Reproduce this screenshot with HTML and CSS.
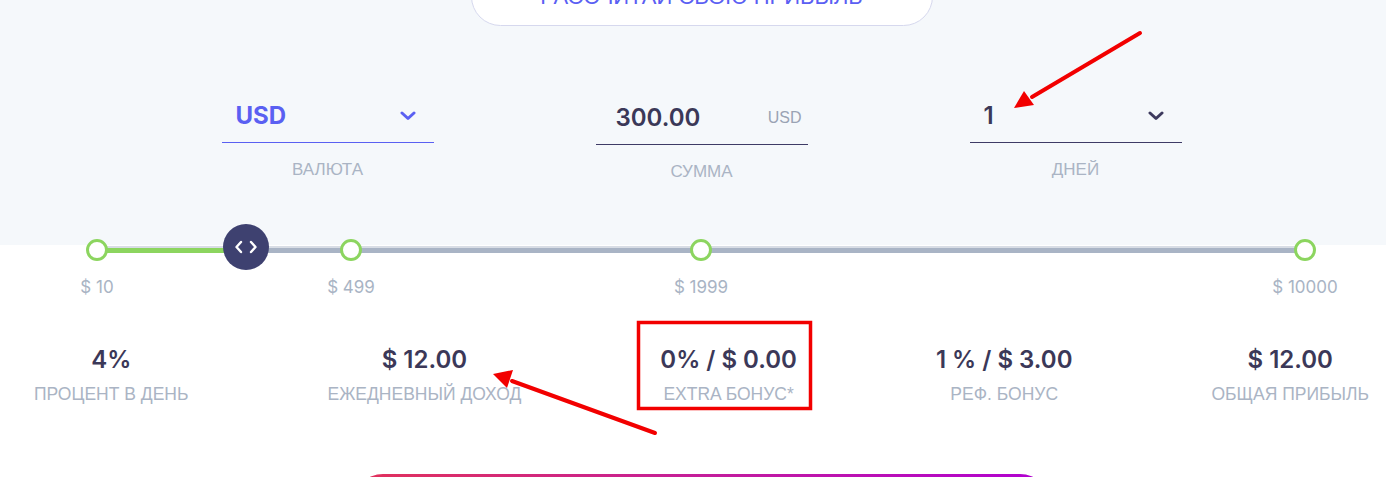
FILE: index.html
```html
<!DOCTYPE html>
<html lang="ru">
<head>
<meta charset="utf-8">
<title>Калькулятор прибыли</title>
<link rel="stylesheet" href="styles.css">
</head>
<body>
<section class="hero">
  <div class="inner hero-inner">
    <button class="calc-btn" type="button">РАССЧИТАЙ СВОЮ ПРИБЫЛЬ</button>
    <div class="fields">
      <div class="field">
        <div class="field-row field-row-blue">
          <span class="field-value field-value-blue">USD</span>
          <svg class="chev" viewBox="0 0 16 10" width="16" height="10"><path d="M2 2 L8 7.5 L14 2" fill="none" stroke="#5a60f2" stroke-width="3" stroke-linecap="round" stroke-linejoin="round"/></svg>
        </div>
        <div class="field-label">ВАЛЮТА</div>
      </div>
      <div class="field">
        <div class="field-row field-row-amount">
          <span class="field-value">300.00</span>
          <span class="field-unit">USD</span>
        </div>
        <div class="field-label">СУММА</div>
      </div>
      <div class="field">
        <div class="field-row">
          <span class="field-value">1</span>
          <svg class="chev" viewBox="0 0 16 10" width="16" height="10"><path d="M2 2 L8 7.5 L14 2" fill="none" stroke="#3d3a5e" stroke-width="3" stroke-linecap="round" stroke-linejoin="round"/></svg>
        </div>
        <div class="field-label">ДНЕЙ</div>
      </div>
    </div>
  </div>
</section>

<main class="inner">
  <div class="slider">
    <div class="track">
      <div class="fill" style="width:149px"></div>
      <span class="dot" style="left:0%"></span>
      <span class="dot" style="left:21.03%"></span>
      <span class="dot" style="left:50%"></span>
      <span class="dot" style="left:100%"></span>
      <span class="handle" style="left:149px">
        <svg viewBox="0 0 24 14" width="24" height="14"><path d="M7 2 L2.5 7 L7 12 M17 2 L21.5 7 L17 12" fill="none" stroke="#fff" stroke-width="2.4" stroke-linecap="round" stroke-linejoin="round"/></svg>
      </span>
    </div>
    <div class="ticks">
      <span class="tick" style="left:0%">$ 10</span>
      <span class="tick" style="left:21.03%">$ 499</span>
      <span class="tick" style="left:50%">$ 1999</span>
      <span class="tick" style="left:100%">$ 10000</span>
    </div>
  </div>

  <div class="stats">
    <div class="stat">
      <div class="stat-value">4%</div>
      <div class="stat-label">ПРОЦЕНТ В ДЕНЬ</div>
    </div>
    <div class="stat">
      <div class="stat-value">$ 12.00</div>
      <div class="stat-label">ЕЖЕДНЕВНЫЙ ДОХОД</div>
    </div>
    <div class="stat">
      <div class="stat-value">0% / $ 0.00</div>
      <div class="stat-label">EXTRA БОНУС*</div>
    </div>
    <div class="stat">
      <div class="stat-value">1 % / $ 3.00</div>
      <div class="stat-label">РЕФ. БОНУС</div>
    </div>
    <div class="stat">
      <div class="stat-value">$ 12.00</div>
      <div class="stat-label">ОБЩАЯ ПРИБЫЛЬ</div>
    </div>
  </div>

  <div class="cta-wrap">
    <button class="cta" type="button" aria-label="Инвестировать"></button>
  </div>
</main>

<svg class="annot" viewBox="0 0 1386 477" width="1386" height="477">
  <rect x="638.5" y="322.5" width="172" height="86" fill="none" stroke="#f20000" stroke-width="3.5"/>
  <line x1="1140" y1="33" x2="1032" y2="97" stroke="#f20000" stroke-width="4" stroke-linecap="round"/>
  <polygon points="1014,108 1024,91 1034,105" fill="#f20000"/>
  <line x1="655" y1="433" x2="512" y2="381" stroke="#f20000" stroke-width="4" stroke-linecap="round"/>
  <polygon points="493,374 513,370 507,388" fill="#f20000"/>
</svg>
</body>
</html>
```

FILE: styles.css
```css
* { box-sizing: border-box; }

html, body {
  margin: 0;
  padding: 0;
}

body {
  width: 1386px;
  height: 477px;
  overflow: hidden;
  background: #ffffff;
  font-family: "Liberation Sans", Arial, sans-serif;
  position: relative;
}

.inner {
  margin-left: 17px;
  width: 1369px;
}

.hero {
  background: #f5f8fb;
  height: 245px;
}

.hero-inner {
  display: flex;
  flex-direction: column;
  align-items: center;
}

.calc-btn {
  margin-top: -33px;
  width: 462px;
  height: 59px;
  border: 1px solid #d6d8ee;
  border-radius: 30px;
  background: #ffffff;
  color: #5b5ff3;
  font-family: "Liberation Sans", Arial, sans-serif;
  font-size: 22px;
  line-height: 1;
  padding: 0;
}

.fields {
  margin-top: 74px;
  display: flex;
  gap: 162px;
  align-items: flex-start;
}

.field {
  width: 212px;
  display: flex;
  flex-direction: column;
}

.field-row {
  height: 43px;
  display: flex;
  align-items: center;
  justify-content: space-between;
  padding: 1px 18px 12px 14px;
  border-bottom: 1px solid #3e3b66;
}

.field-row-blue {
  border-bottom-color: #5a60f2;
}

.field-row-amount {
  height: 45px;
  padding: 3px 6px 12px 20px;
}

.field-value {
  font-family: Inter, "Liberation Sans", sans-serif;
  font-weight: 600;
  font-size: 24px;
  line-height: 30px;
  color: #3b3858;
}

.field-value-blue {
  color: #5a60f2;
  font-weight: 700;
}

.field-unit {
  font-family: "Liberation Sans", Arial, sans-serif;
  font-size: 16px;
  color: #9aa3b4;
  line-height: 30px;
}

.chev {
  display: block;
}

.field-label {
  margin-top: 17px;
  text-align: center;
  font-size: 17px;
  line-height: 20px;
  color: #aab4c4;
}

.slider {
  position: relative;
  margin-top: -23px;
  height: 80px;
  margin-left: 80px;
  width: 1208px;
}

.track {
  position: absolute;
  left: 0;
  right: 0;
  top: 26px;
  height: 5px;
  background: #a9b4c5;
  box-shadow: 0 -2px 0 #d8dde5;
}

.fill {
  position: absolute;
  left: 0;
  top: 0;
  height: 5px;
  background: #8cd55f;
}

.dot {
  position: absolute;
  top: -9px;
  width: 22px;
  height: 22px;
  margin-left: -11px;
  border-radius: 50%;
  border: 3.5px solid #8cd55f;
  background: #ffffff;
}

.handle {
  position: absolute;
  top: -24px;
  width: 46px;
  height: 46px;
  margin-left: -23px;
  border-radius: 50%;
  background: #3e4170;
  display: flex;
  align-items: center;
  justify-content: center;
}

.handle svg { display: block; }

.ticks {
  position: absolute;
  left: 0;
  right: 0;
  top: 55px;
  height: 20px;
}

.tick {
  position: absolute;
  top: 0;
  transform: translateX(-50%);
  white-space: nowrap;
  font-family: Inter, "Liberation Sans", sans-serif;
  font-size: 17px;
  line-height: 20px;
  color: #a9b4c4;
}

.stats {
  margin-top: 43px;
  padding: 0 17px;
  display: flex;
  justify-content: space-between;
}

.stat {
  display: flex;
  flex-direction: column;
  align-items: center;
}

.stat-value {
  font-family: Inter, "Liberation Sans", sans-serif;
  font-weight: 600;
  font-size: 24px;
  line-height: 30px;
  color: #3b3858;
  white-space: nowrap;
}

.stat-label {
  margin-top: 8px;
  font-size: 17.5px;
  line-height: 22px;
  color: #aab4c4;
  white-space: nowrap;
}

.cta-wrap {
  margin-top: 69px;
  display: flex;
  justify-content: center;
}

.cta {
  width: 697px;
  height: 60px;
  border: 0;
  border-radius: 30px;
  background: linear-gradient(90deg, #e2325a 0%, #c41d9a 50%, #b000d2 100%);
  padding: 0;
}

.annot {
  position: absolute;
  left: 0;
  top: 0;
  pointer-events: none;
}
```
